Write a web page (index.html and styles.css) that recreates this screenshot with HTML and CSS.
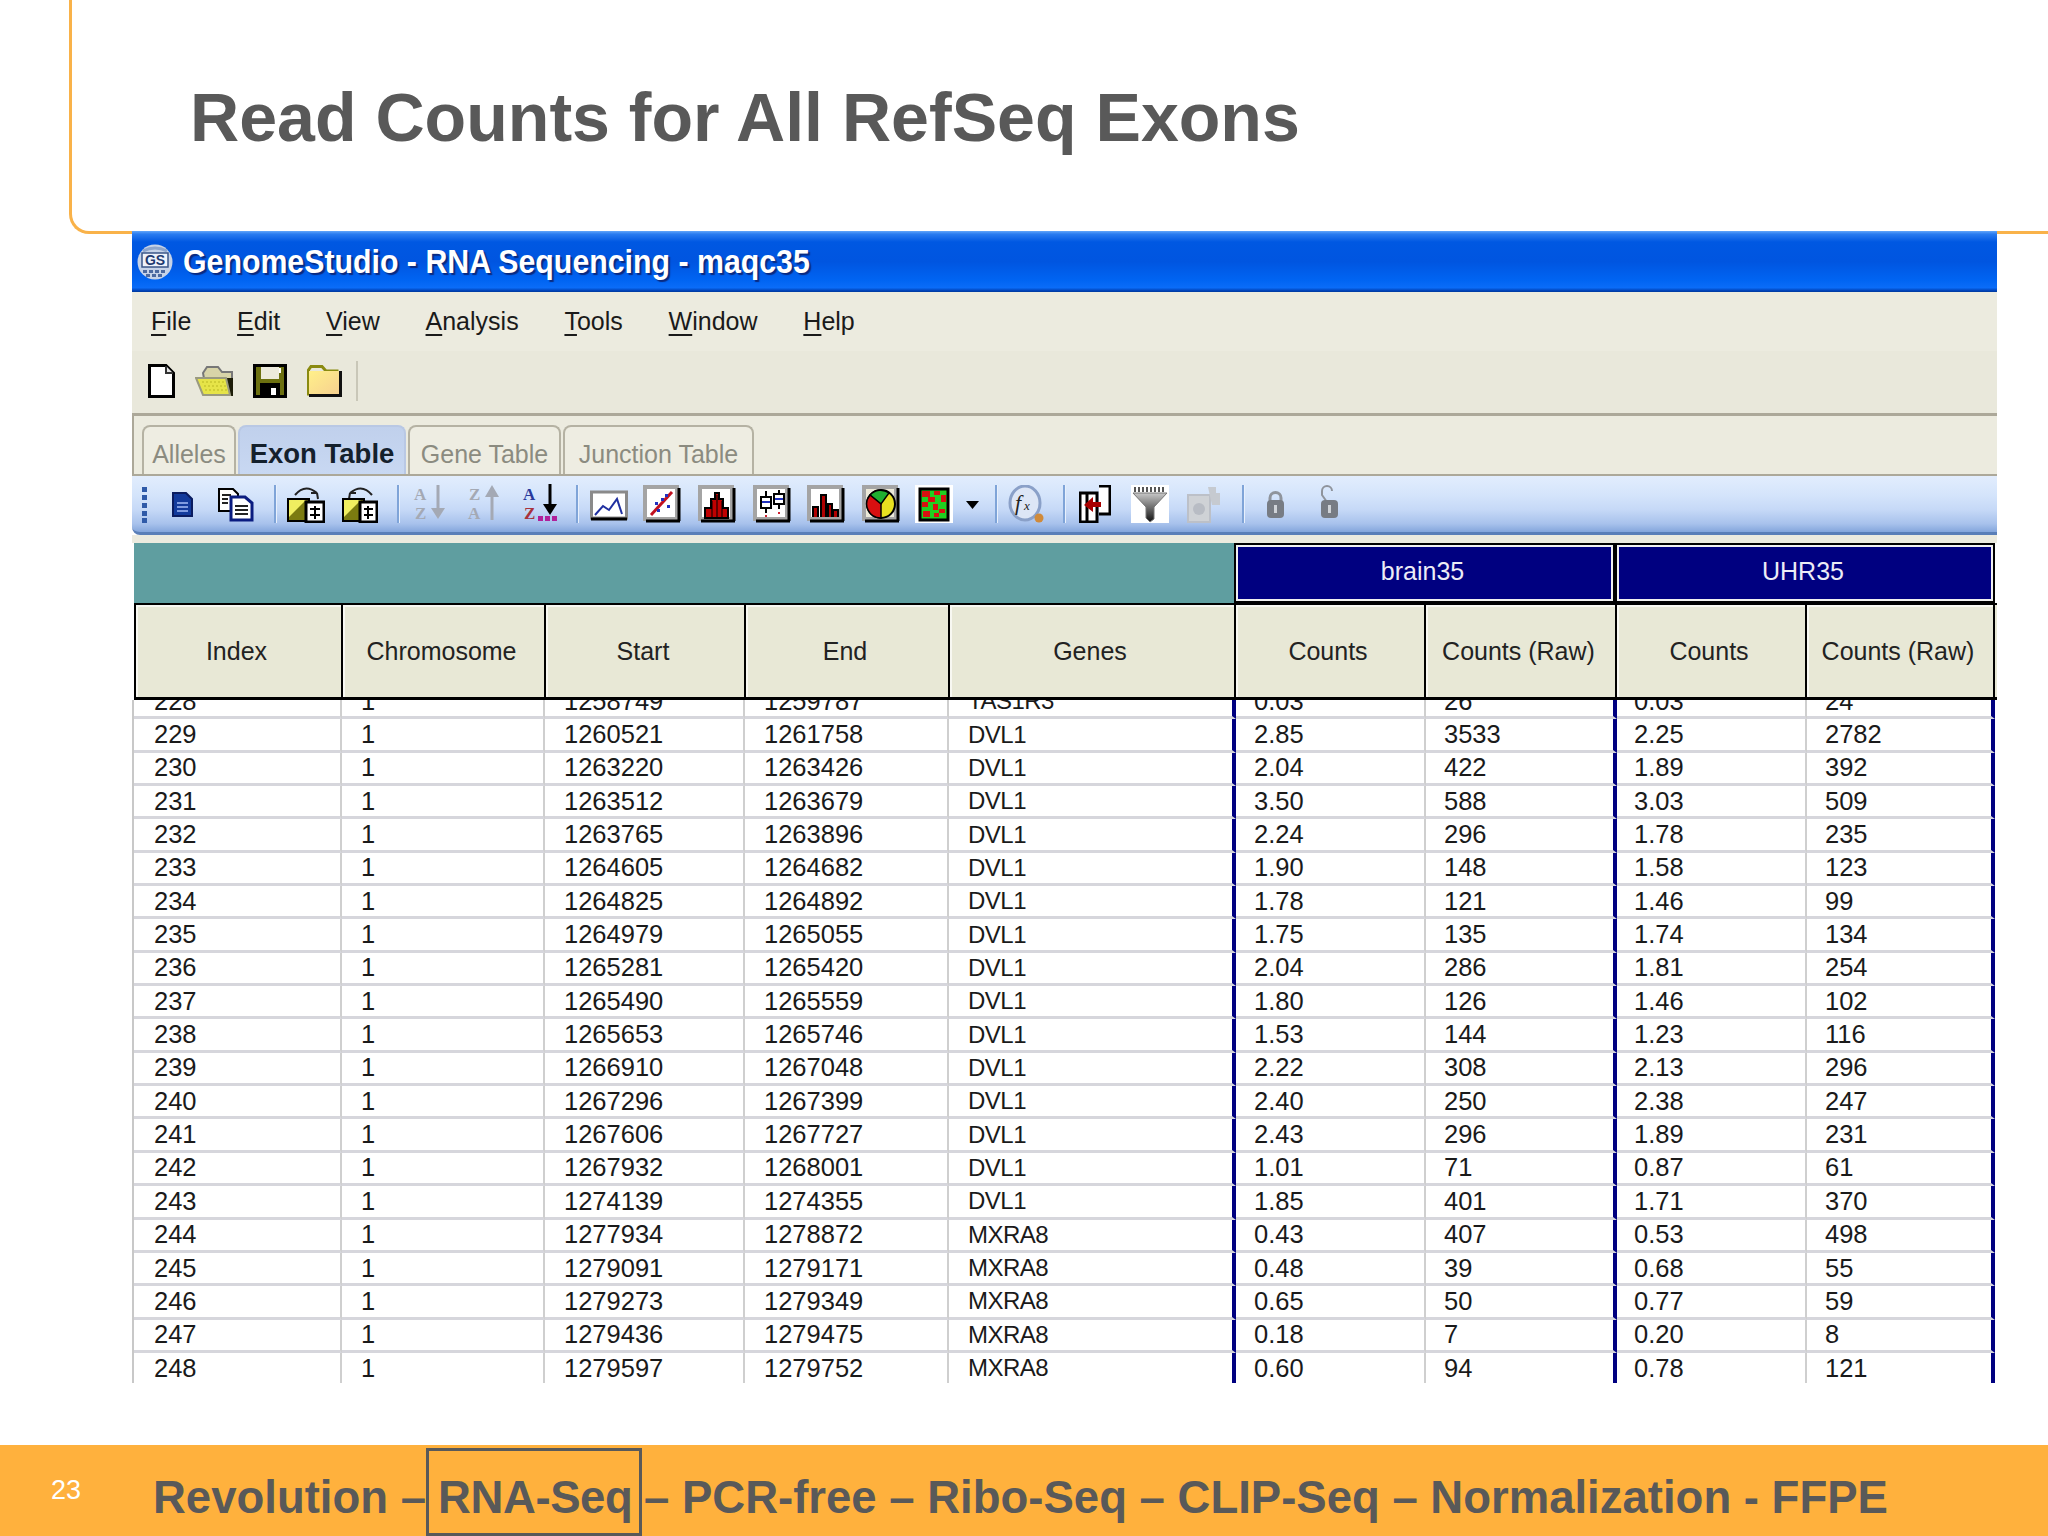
FILE: index.html
```html
<!DOCTYPE html>
<html lang="en">
<head>
<meta charset="utf-8">
<title>Read Counts for All RefSeq Exons</title>
<link rel="stylesheet" href="styles.css">
</head>
<body>
<div class="slide">
  <header class="head"><h1 class="slide-title">Read Counts for All RefSeq Exons</h1></header>
  <section class="win">
    <div class="titlebar">
      <svg class="ico" width="36" height="36" viewBox="0 0 36 36"><circle cx="18" cy="18" r="17.500" fill="#c6d3e8"/><path d="M6 7q12-6 24 0" stroke="#8ea6cc" stroke-width="3" fill="none"/><rect x="5" y="9" width="26" height="14" fill="#eef2fa" stroke="#3a5688" stroke-width="1.500"/><text x="18" y="21" font-size="14" font-weight="700" text-anchor="middle" fill="#1e3a70" font-family="Liberation Sans">GS</text><path d="M6 26h4v3H6zM12 26h4v3h-4zM18 26h4v3h-4zM24 26h4v3h-4zM9 30h4v3H9zM15 30h4v3h-4zM21 30h4v3h-4z" fill="#4c6aa0"/></svg>
      <span class="apptitle">GenomeStudio - RNA Sequencing - maqc35</span>
    </div>
    <nav class="menubar">
      <span><u>F</u>ile</span><span><u>E</u>dit</span><span><u>V</u>iew</span><span><u>A</u>nalysis</span><span><u>T</u>ools</span><span><u>W</u>indow</span><span><u>H</u>elp</span>
    </nav>
    <div class="filebar">
      <svg width="27" height="34" viewBox="0 0 27 34"><path d="M1.500 1.500H18L25.500 9V32.500H1.500Z" fill="#fff" stroke="#000" stroke-width="3"/><path d="M18 2V9H25" fill="#e4e4e4" stroke="#333" stroke-width="2"/></svg>
      <svg width="39" height="34" viewBox="0 0 39 34"><path d="M8 9L12 3H23L27 8H37V31H12Z" fill="#d8d4a8" stroke="#777" stroke-width="2"/><path d="M30 14H38V32H13L30 28Z" fill="#1d1d08"/><path d="M1 14H31L35 31H8Z" fill="#e6e448" stroke="#9a9a80" stroke-width="2"/><path d="M7 18H30M9 22H31M10 26H32" stroke="#c9c630" stroke-width="1.500" stroke-dasharray="2 2"/></svg>
      <svg width="34" height="34" viewBox="0 0 34 34"><rect x="1.500" y="1.500" width="31" height="31" fill="#6c7010" stroke="#000" stroke-width="3"/><rect x="8" y="3" width="18" height="12" fill="#eceadc"/><path d="M27 4V9" stroke="#fff" stroke-width="2"/><rect x="7" y="19" width="20" height="13" fill="#000"/><rect x="18" y="24" width="5" height="7" fill="#fff"/></svg>
      <svg width="35" height="32" viewBox="0 0 35 32"><path d="M1.500 30.500V5L4 1.500H15L19 6H31.500" fill="none" stroke="#8a8a10" stroke-width="3"/><path d="M2 31V6H33V31Z" fill="url(#pale)"/><path d="M33.500 6V30.500H2" fill="none" stroke="#111" stroke-width="3"/><defs><linearGradient id="pale" x1="0" y1="0" x2="1" y2="1"><stop offset="0" stop-color="#fff08a"/><stop offset="1" stop-color="#f6cf90"/></linearGradient></defs></svg>
      <i class="sep-file"></i>
    </div>
    <div class="tabstrip">
      <span class="tab tab-a">Alleles</span><span class="tab tab-on">Exon Table</span><span class="tab tab-g">Gene Table</span><span class="tab tab-j">Junction Table</span>
    </div>
    <div class="toolbar">
      <svg width="5" height="38" viewBox="0 0 5 38" fill="#2f5aa8"><rect y="2" width="5" height="5"/><rect y="10" width="5" height="5"/><rect y="18" width="5" height="5"/><rect y="26" width="5" height="5"/><rect y="33" width="5" height="5"/></svg>
      <svg width="21" height="38" viewBox="0 0 21 38"><path d="M1 8H14L20 14V31H1Z" fill="#123a9c" stroke="#0a1c60" stroke-width="2"/><path d="M5 18H16M5 22H16M5 26H16" stroke="#7f9be0" stroke-width="2"/></svg>
      <svg width="36" height="38" viewBox="0 0 36 38"><path d="M1 4H15L20 9V26H1Z" fill="#fff" stroke="#000" stroke-width="2"/><path d="M13 12H27L34 18V35H13Z" fill="#fff" stroke="#0a1c80" stroke-width="3"/><path d="M4 10H13M4 14H10M4 18H10M17 21H30M17 25H30M17 29H30" stroke="#222" stroke-width="2"/></svg>
      <i class="sep"></i>
      <svg width="38" height="38" viewBox="0 0 38 38"><path d="M8 10Q18-2 30 8M30 8L24 8M30 8L31 14" stroke="#222" stroke-width="2" fill="none"/><path d="M1 14H22V36H1Z" fill="#7b7b10" stroke="#000" stroke-width="2"/><path d="M2 15H19L2 32Z" fill="#f0ee60"/><rect x="19" y="17" width="18" height="20" fill="#fff" stroke="#000" stroke-width="3"/><path d="M23 24H33M23 30H33M28 21V34" stroke="#000" stroke-width="2"/></svg>
      <svg width="36" height="38" viewBox="0 0 36 38"><path d="M30 10Q20-2 8 8M8 8L14 8M8 8L7 14" stroke="#222" stroke-width="2" fill="none"/><path d="M1 14H22V36H1Z" fill="#7b7b10" stroke="#000" stroke-width="2"/><path d="M2 15H19L2 32Z" fill="#f0ee60"/><rect x="18" y="17" width="17" height="20" fill="#fff" stroke="#000" stroke-width="3"/><path d="M22 24H31M22 30H31M26 21V34" stroke="#000" stroke-width="2"/></svg>
      <i class="sep"></i>
      <svg width="34" height="39" viewBox="0 0 34 39" font-family="Liberation Serif" font-weight="700" font-size="17" fill="#a4a9b4"><text x="1" y="15.500">A</text><text x="2" y="34.500">Z</text><path d="M25 1V28" stroke="#a4a9b4" stroke-width="3"/><path d="M18 24H32L25 35Z"/></svg>
      <svg width="34" height="39" viewBox="0 0 34 39" font-family="Liberation Serif" font-weight="700" font-size="17" fill="#a4a9b4"><text x="2" y="15.500">Z</text><text x="1" y="34.500">A</text><path d="M25 10V36" stroke="#a4a9b4" stroke-width="3"/><path d="M18 13H32L25 1Z"/></svg>
      <svg width="36" height="39" viewBox="0 0 36 39" font-family="Liberation Serif" font-weight="700" font-size="17"><text x="1" y="15.500" fill="#2a3a9c">A</text><text x="2" y="34.500" fill="#a8323c">Z</text><path d="M28 0V24" stroke="#000" stroke-width="3"/><path d="M21 20H35L28 31Z"/><path d="M16 32h5v5h-5zM23 32h5v5h-5zM30 32h5v5h-5z" fill="#b0209a"/></svg>
      <i class="sep"></i>
      <svg width="38" height="38" viewBox="0 0 38 38"><rect x="1.500" y="7" width="35" height="26" fill="#fff" stroke="#8a8a8a" stroke-width="3"/><path d="M1 34H37" stroke="#000" stroke-width="3"/><path d="M5 30L13 21L19 25L27 14L32 29" stroke="#2030a0" stroke-width="2" fill="none"/></svg>
      <svg width="38" height="38" viewBox="0 0 38 38"><rect x="2" y="2" width="32" height="32" fill="#fff" stroke="#a4a4a4" stroke-width="4"/><path d="M3 36H37M36 3V36" stroke="#000" stroke-width="3"/><path d="M8 30L29 7" stroke="#c01020" stroke-width="3"/><path d="M12 17h3v3h-3zM18 13h3v3h-3zM24 20h3v3h-3zM14 24h3v3h-3zM22 9h3v3h-3z" fill="#2030c0"/></svg>
      <svg width="38" height="38" viewBox="0 0 38 38"><rect x="2" y="2" width="32" height="32" fill="#fff" stroke="#a4a4a4" stroke-width="4"/><path d="M3 36H37M36 3V36" stroke="#000" stroke-width="3"/><path d="M7 33V23h6V14h4V8h4v6h4v9h5v10Z" fill="#c00000" stroke="#000" stroke-width="2"/><path d="M14 16V33M19 10V33M24 16V33" stroke="#000"/></svg>
      <svg width="38" height="38" viewBox="0 0 38 38"><rect x="2" y="2" width="32" height="32" fill="#fff" stroke="#a4a4a4" stroke-width="4"/><path d="M3 36H37M36 3V36" stroke="#000" stroke-width="3"/><path d="M13 6V28M26 5V24" stroke="#000" stroke-width="2"/><rect x="8" y="12" width="10" height="11" fill="#fff" stroke="#000" stroke-width="2"/><rect x="21" y="9" width="10" height="10" fill="#fff" stroke="#000" stroke-width="2"/><path d="M9 17H17M22 14H30" stroke="#2030c0" stroke-width="2"/><path d="M12 30h2v2h-2zM25 27h2v2h-2z" fill="#d02030"/></svg>
      <svg width="38" height="38" viewBox="0 0 38 38"><rect x="2" y="2" width="32" height="32" fill="#fff" stroke="#a4a4a4" stroke-width="4"/><path d="M3 36H37M36 3V36" stroke="#000" stroke-width="3"/><path d="M6 32V22h5V32M14 32V10h5V32M21 32V19h4V32M26 32V25h5V32" fill="#b00000" stroke="#000" stroke-width="2"/></svg>
      <svg width="38" height="38" viewBox="0 0 38 38"><rect x="2" y="2" width="32" height="32" fill="#ece9d8" stroke="#a4a4a4" stroke-width="4"/><path d="M3 36H37M36 3V36" stroke="#000" stroke-width="3"/><circle cx="19" cy="19" r="14" fill="#e8e020" stroke="#000" stroke-width="2"/><path d="M19 19L8 10A14 14 0 0 1 27 8Z" fill="#20b030" stroke="#000" stroke-width="1.500"/><path d="M19 19L8 10A14 14 0 0 0 19 33Z" fill="#d81010" stroke="#000" stroke-width="1.500"/></svg>
      <svg width="38" height="38" viewBox="0 0 38 38"><rect width="38" height="38" fill="#fff"/><rect x="5" y="4" width="28" height="31" fill="#20d020" stroke="#000" stroke-width="3"/><path d="M7 6h8v6H7zM19 6h6v4h-6zM26 10h5v7h-5zM13 12h7v5h-7zM7 17h6v5H7zM18 19h5v6h-5zM8 26h7v6H8zM24 24h6v4h-6zM19 28h5v4h-5z" fill="#d81010"/></svg>
      <svg width="13" height="38" viewBox="0 0 13 38"><path d="M0 16H13L6.500 24Z" fill="#000"/></svg>
      <i class="sep"></i>
      <svg width="40" height="38" viewBox="0 0 40 38"><ellipse cx="19" cy="18" rx="15" ry="17" fill="#dde6f6" stroke="#8aa0c8" stroke-width="3"/><path d="M19 27c-3-4-3-12 2-16" fill="none"/><circle cx="33" cy="33" r="4.500" fill="#d08a3a"/><text x="9" y="25" font-family="Liberation Serif" font-style="italic" font-size="22" fill="#222">f</text><text x="18" y="25" font-family="Liberation Serif" font-style="italic" font-size="13" fill="#222">x</text></svg>
      <i class="sep"></i>
      <svg width="32" height="38" viewBox="0 0 32 38"><path d="M1 8H18V37H1ZM8 8V37M20 1H31V29H20" fill="#fff" stroke="#000" stroke-width="3"/><path d="M22 17H14V12L5 20L14 27V22H22Z" fill="#a80000"/></svg>
      <svg width="38" height="38" viewBox="0 0 38 38"><defs><linearGradient id="fun" x1="0" y1="0" x2="0" y2="1"><stop offset="0" stop-color="#c8c8c8"/><stop offset="1" stop-color="#111"/></linearGradient></defs><rect width="38" height="38" fill="#fff"/><path d="M2 8H36L23 22V34L19 37L15 33V22Z" fill="url(#fun)" stroke="#777"/><path d="M4 2V7M8 2V7M12 2V7M16 2V7M20 2V7M24 2V7M28 2V7M32 2V7" stroke="#555" stroke-width="2"/></svg>
      <svg width="35" height="38" viewBox="0 0 35 38"><path d="M2 10H24V37H2Z" fill="#cfd2d6" stroke="#bcc0c8" stroke-width="2"/><circle cx="13" cy="24" r="6" fill="#b8bcc4"/><path d="M22 2h8v6h4v12h-8z" fill="#c6cad0"/></svg>
      <i class="sep"></i>
      <svg width="19" height="38" viewBox="0 0 19 38"><path d="M4 16V13a5.500 5.500 0 0 1 11 0V16" fill="none" stroke="#8f949c" stroke-width="3"/><rect x="1" y="15" width="17" height="18" rx="4" fill="#777c84"/><rect x="8" y="20" width="3" height="8" fill="#cfd3d8"/></svg>
      <svg width="20" height="38" viewBox="0 0 20 38"><path d="M3 6a5 5 0 0 1 10 0M3 6V10L8 17" fill="none" stroke="#8f949c" stroke-width="2"/><rect x="2" y="15" width="17" height="18" rx="4" fill="#777c84"/><rect x="9" y="20" width="3" height="8" fill="#cfd3d8"/></svg>
    </div>
    <div class="toolgap"></div>
    <div class="grid-wrap">
      <div class="groups">
        <div class="group-blank"></div>
        <div class="group">brain35</div>
        <div class="group">UHR35</div>
      </div>
      <div class="cols hdr">
        <div>Index</div><div>Chromosome</div><div>Start</div><div>End</div><div>Genes</div><div>Counts</div><div>Counts (Raw)</div><div>Counts</div><div>Counts (Raw)</div>
      </div>
      <div class="body">
        <div class="cols row"><div>228</div><div>1</div><div>1258749</div><div>1259787</div><div>TAS1R3</div><div>0.03</div><div>26</div><div>0.03</div><div>24</div></div>
        <div class="cols row"><div>229</div><div>1</div><div>1260521</div><div>1261758</div><div>DVL1</div><div>2.85</div><div>3533</div><div>2.25</div><div>2782</div></div>
        <div class="cols row"><div>230</div><div>1</div><div>1263220</div><div>1263426</div><div>DVL1</div><div>2.04</div><div>422</div><div>1.89</div><div>392</div></div>
        <div class="cols row"><div>231</div><div>1</div><div>1263512</div><div>1263679</div><div>DVL1</div><div>3.50</div><div>588</div><div>3.03</div><div>509</div></div>
        <div class="cols row"><div>232</div><div>1</div><div>1263765</div><div>1263896</div><div>DVL1</div><div>2.24</div><div>296</div><div>1.78</div><div>235</div></div>
        <div class="cols row"><div>233</div><div>1</div><div>1264605</div><div>1264682</div><div>DVL1</div><div>1.90</div><div>148</div><div>1.58</div><div>123</div></div>
        <div class="cols row"><div>234</div><div>1</div><div>1264825</div><div>1264892</div><div>DVL1</div><div>1.78</div><div>121</div><div>1.46</div><div>99</div></div>
        <div class="cols row"><div>235</div><div>1</div><div>1264979</div><div>1265055</div><div>DVL1</div><div>1.75</div><div>135</div><div>1.74</div><div>134</div></div>
        <div class="cols row"><div>236</div><div>1</div><div>1265281</div><div>1265420</div><div>DVL1</div><div>2.04</div><div>286</div><div>1.81</div><div>254</div></div>
        <div class="cols row"><div>237</div><div>1</div><div>1265490</div><div>1265559</div><div>DVL1</div><div>1.80</div><div>126</div><div>1.46</div><div>102</div></div>
        <div class="cols row"><div>238</div><div>1</div><div>1265653</div><div>1265746</div><div>DVL1</div><div>1.53</div><div>144</div><div>1.23</div><div>116</div></div>
        <div class="cols row"><div>239</div><div>1</div><div>1266910</div><div>1267048</div><div>DVL1</div><div>2.22</div><div>308</div><div>2.13</div><div>296</div></div>
        <div class="cols row"><div>240</div><div>1</div><div>1267296</div><div>1267399</div><div>DVL1</div><div>2.40</div><div>250</div><div>2.38</div><div>247</div></div>
        <div class="cols row"><div>241</div><div>1</div><div>1267606</div><div>1267727</div><div>DVL1</div><div>2.43</div><div>296</div><div>1.89</div><div>231</div></div>
        <div class="cols row"><div>242</div><div>1</div><div>1267932</div><div>1268001</div><div>DVL1</div><div>1.01</div><div>71</div><div>0.87</div><div>61</div></div>
        <div class="cols row"><div>243</div><div>1</div><div>1274139</div><div>1274355</div><div>DVL1</div><div>1.85</div><div>401</div><div>1.71</div><div>370</div></div>
        <div class="cols row"><div>244</div><div>1</div><div>1277934</div><div>1278872</div><div>MXRA8</div><div>0.43</div><div>407</div><div>0.53</div><div>498</div></div>
        <div class="cols row"><div>245</div><div>1</div><div>1279091</div><div>1279171</div><div>MXRA8</div><div>0.48</div><div>39</div><div>0.68</div><div>55</div></div>
        <div class="cols row"><div>246</div><div>1</div><div>1279273</div><div>1279349</div><div>MXRA8</div><div>0.65</div><div>50</div><div>0.77</div><div>59</div></div>
        <div class="cols row"><div>247</div><div>1</div><div>1279436</div><div>1279475</div><div>MXRA8</div><div>0.18</div><div>7</div><div>0.20</div><div>8</div></div>
        <div class="cols row"><div>248</div><div>1</div><div>1279597</div><div>1279752</div><div>MXRA8</div><div>0.60</div><div>94</div><div>0.78</div><div>121</div></div>
      </div>
    </div>
  </section>
  <footer class="foot">
    <span class="pageno">23</span>
    <span class="crumb">Revolution –</span>
    <span class="crumb crumb-box">RNA-Seq</span>
    <span class="crumb">– PCR-free – Ribo-Seq – CLIP-Seq – Normalization - FFPE</span>
  </footer>
</div>
</body>
</html>
```

FILE: styles.css
```css
* { box-sizing: border-box; }
html, body { margin: 0; padding: 0; background: #fff; }
body { font-family: "Liberation Sans", Arial, sans-serif; }
.slide { width: 2048px; height: 1536px; overflow: hidden; display: flex; flex-direction: column; }

.head {
  flex: none;
  height: 234px;
  margin-left: 69px;
  border-left: 3px solid #f9b249;
  border-bottom: 3px solid #f9b249;
  border-bottom-left-radius: 20px;
  padding: 72px 0 0 118px;
}
.slide-title { margin: 0; font-size: 68.100px; line-height: 90px; font-weight: 700; color: #595959; white-space: nowrap; height: 90px; }

.win { flex: none; margin: -3px 51px 0 132px; height: 1152px; background: #fff; display: flex; flex-direction: column; }

.titlebar {
  flex: none; height: 61px; display: flex; align-items: center; padding: 0 0 0 5px; gap: 10px;
  background: linear-gradient(#62a6fa 0, #2a7cf0 5%, #0058e2 18%, #0055e0 50%, #0064f2 80%, #0a6cf8 93%, #0040b4 98%, #003a9c 100%);
}
.apptitle { font-size: 30.300px; font-weight: 700; color: #fff; text-shadow: 2px 2px 1px #0a2a80; white-space: nowrap; transform: scaleY(1.08); }

.menubar { flex: none; height: 59px; padding: 0 0 0 19px; display: flex; align-items: center; gap: 45.800px; background: #ecebdf; font-size: 25px; color: #1a1a1a; }
.menubar u { text-underline-offset: 4px; }

.filebar {
  flex: none; height: 65px; padding: 0 0 2px 16px; background: #e9e8db; border-bottom: 3px solid #aca899;
  display: grid; grid-template-columns: 47px 58px 54px 49px 3px; align-items: center;
}
.sep-file { display: block; width: 2px; height: 40px; background: #c9c7b8; }

.tabstrip { flex: none; height: 60px; padding: 10px 0 0 8px; background: #ecebdf; display: flex; align-items: flex-end; gap: 2px; border-bottom: 2px solid #aca899; border-left: 2px solid #aca899; }
.tab { height: 49px; padding-top: 7px; display: flex; align-items: center; justify-content: center; border: 2px solid #b5b2a3; border-bottom: 0; border-radius: 8px 8px 0 0; font-size: 25px; color: #8b8b80; background: #eeede2; }
.tab-a { width: 94px; }
.tab-on { width: 168px; font-size: 27.500px; font-weight: 700; color: #14202c; background: linear-gradient(#c0d0ec, #c8d8f2); border-color: #b9c8e4; }
.tab-g { width: 153px; }
.tab-j { width: 191px; }

.toolbar {
  flex: none; height: 59px; padding: 0 0 1px 10px;
  border-bottom: 3px solid #5a7fb8; border-radius: 0 0 0 8px;
  background: linear-gradient(#e2edfd 0, #d4e4fb 35%, #c6d9f7 60%, #a8c2ec 85%, #84a6dc 100%);
  display: grid; align-items: center;
  grid-template-columns: 30px 46px 56px 13px 55px 55px 16px 54px 55px 54px 14px 53px 55px 55px 54px 55px 53px 51px 29px 11px 57px 16px 52px 55px 56px 24px 53px auto;
}
.sep { display: block; width: 2px; height: 38px; background: #7fa4d8; box-shadow: 1px 0 0 #e8f0fc; }

.toolgap { flex: none; height: 8px; background: #ecebdf; }

.grid-wrap { flex: 1; min-height: 0; display: flex; flex-direction: column; }
.groups { flex: none; height: 60px; margin-left: 2px; display: grid; grid-template-columns: 1100px 381px 380px; }
.group-blank { background: #5f9ea0; }
.group {
  display: flex; align-items: center; justify-content: center;
  background: #000080; color: #ececf6; font-size: 25px;
  border: 2px solid #000; box-shadow: inset 0 0 0 2px #f0f0f0;
  padding: 0 4px 4px 0;
}

.cols { display: grid; grid-template-columns: 208px 203px 200px 204px 287px 190px 191px 190px 188px; }
.hdr { flex: none; height: 97px; margin-left: 2px; border-top: 2px solid #000; border-bottom: 3px solid #000; border-left: 2px solid #000; color: #222; font-size: 25px; background: #e8e8d6; grid-template-columns: 207px 203px 200px 204px 286px 190px 191px 190px 188px; }
.hdr > div { display: flex; align-items: center; justify-content: center; padding-right: 4px; border-right: 2px solid #000; white-space: nowrap; box-shadow: inset 2px 2px 0 #f8f8f2; }

.body { flex: 1; min-height: 0; overflow: hidden; border-left: 2px solid #c8c8c8; }
.row { height: 33.350px; font-size: 25.500px; color: #1a1a1a; }
.row:first-child { margin-top: -14px; }
.row > div { display: flex; align-items: center; padding-left: 19px; border-right: 2px solid #cfcfcf; border-bottom: 3px solid #d6d6dc; white-space: nowrap; }
.row > div:first-child { padding-left: 20px; }
.row > div:nth-child(5) { font-size: 24px; letter-spacing: -.5px; }
.row > div:nth-child(5), .row > div:nth-child(7), .row > div:nth-child(9) { border-right: 4px solid #000080; }
.row > div:nth-child(6), .row > div:nth-child(7), .row > div:nth-child(9) { padding-left: 18px; }
.row > div:nth-child(8) { padding-left: 17px; }

.foot {
  flex: none; margin-top: 62px; height: 91px; padding: 3px 0 0 51px;
  background: #ffb13d; display: flex; align-items: stretch; color: #595959; white-space: nowrap;
}
.pageno { color: #fff; font-size: 27px; width: 102px; padding-top: 22px; line-height: 40px; }
.crumb { font-size: 45.500px; font-weight: 700; line-height: 92px; padding-top: 4px; }
.crumb-box { border: 3px solid #595959; margin: 0 2px 0 0; padding: 1px 9px 0; width: 216px; letter-spacing: -.4px; }
```
